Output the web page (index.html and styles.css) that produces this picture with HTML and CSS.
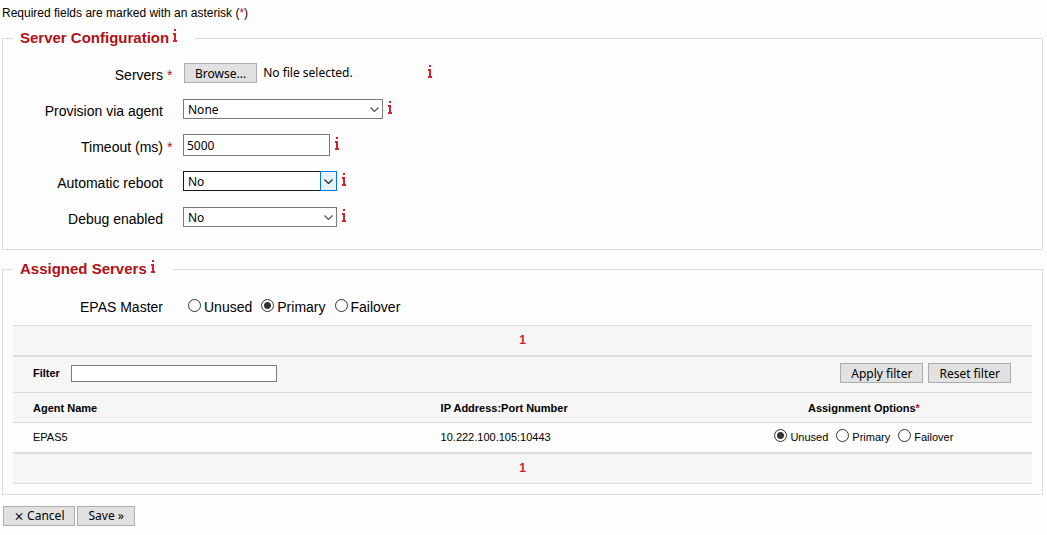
FILE: index.html
```html
<!DOCTYPE html>
<html lang="en">
<head>
  <meta charset="UTF-8">
  <meta name="viewport" content="width=device-width, initial-scale=1.0">
  <title>Server Configuration</title>
  <link rel="stylesheet" href="styles.css">
</head>
<body>
  <svg class="sprite" aria-hidden="true">
    <symbol id="info" viewBox="0 0 4 13">
      <path d="M1 0h2v2h-2zM0 4h3v7h1v2H0v-2h1V6H0z" fill="#d2232a"/>
    </symbol>
    <symbol id="arrow" viewBox="0 0 9 5">
      <path d="M0.5 0.5l4 4 4-4" fill="none" stroke="currentColor" stroke-width="1.2"/>
    </symbol>
  </svg>

  <form>
    <p class="note">Required fields are marked with an asterisk (<span class="star">*</span>)</p>

    <fieldset>
      <legend>Server Configuration <svg class="info"><use href="#info"/></svg></legend>
      <div class="row">
        <label for="browse">Servers</label>
        <span class="star">*</span>
        <div class="control">
          <div class="file">
            <button type="button" id="browse" onclick="document.getElementById('servers').click()">Browse...</button>
            <span>No file selected.</span>
            <input type="file" id="servers" hidden>
          </div>
          <svg class="info"><use href="#info"/></svg>
        </div>
      </div>
      <div class="row">
        <label for="agent">Provision via agent</label>
        <span></span>
        <div class="control">
          <div class="select wide">
            <select id="agent"><option>None</option></select>
            <span class="arrow"><svg><use href="#arrow"/></svg></span>
          </div>
          <svg class="info"><use href="#info"/></svg>
        </div>
      </div>
      <div class="row">
        <label for="timeout">Timeout (ms)</label>
        <span class="star">*</span>
        <div class="control">
          <input type="text" id="timeout" class="timeout" value="5000">
          <svg class="info"><use href="#info"/></svg>
        </div>
      </div>
      <div class="row">
        <label for="reboot">Automatic reboot</label>
        <span></span>
        <div class="control">
          <div class="select active">
            <select id="reboot"><option>No</option><option>Yes</option></select>
            <span class="arrow"><svg><use href="#arrow"/></svg></span>
          </div>
          <svg class="info"><use href="#info"/></svg>
        </div>
      </div>
      <div class="row">
        <label for="debug">Debug enabled</label>
        <span></span>
        <div class="control">
          <div class="select">
            <select id="debug"><option>No</option><option>Yes</option></select>
            <span class="arrow"><svg><use href="#arrow"/></svg></span>
          </div>
          <svg class="info"><use href="#info"/></svg>
        </div>
      </div>
    </fieldset>

    <fieldset class="assigned">
      <legend>Assigned Servers <svg class="info"><use href="#info"/></svg></legend>
      <div class="row">
        <span class="label" id="master">EPAS Master</span>
        <span></span>
        <div class="radios" role="radiogroup" aria-labelledby="master">
          <label><input type="radio" name="master">Unused</label>
          <label><input type="radio" name="master" checked>Primary</label>
          <label><input type="radio" name="master">Failover</label>
        </div>
      </div>

      <div class="list">
        <div class="pager">1</div>
        <div class="filter">
          <label for="filter">Filter</label>
          <input type="text" id="filter">
          <button type="button">Apply filter</button>
          <button type="button">Reset filter</button>
        </div>
        <table>
          <thead>
            <tr>
              <th>Agent Name</th>
              <th>IP Address:Port Number</th>
              <th>Assignment Options<span class="star">*</span></th>
            </tr>
          </thead>
          <tbody>
            <tr>
              <td>EPAS5</td>
              <td>10.222.100.105:10443</td>
              <td>
                <div class="radios">
                  <label><input type="radio" name="epas5" checked>Unused</label>
                  <label><input type="radio" name="epas5">Primary</label>
                  <label><input type="radio" name="epas5">Failover</label>
                </div>
              </td>
            </tr>
          </tbody>
        </table>
        <div class="pager last">1</div>
      </div>
    </fieldset>

    <div class="actions">
      <button type="button">⨯ Cancel</button>
      <button type="button">Save »</button>
    </div>
  </form>
</body>
</html>
```
FILE: styles.css
```css
* {
  box-sizing: border-box;
}
body {
  margin: 0;
  padding: 5px 4px 8px 2px;
  font-family: "Liberation Sans", Arial, sans-serif;
  font-size: 14px;
  line-height: 16px;
  color: #000;
  background: #fdfdfd;
}
.sprite {
  display: none;
}
.note {
  margin: 0 0 8px;
  font-size: 12px;
}
.star {
  color: #c8141e;
}
fieldset {
  margin: 0 0 10px;
  padding: 8px 10px 14px 0;
  border: 1px solid #dcdcdc;
  min-width: 0;
}
legend {
  margin-left: 10px;
  padding: 0 18px 0 7px;
  font-size: 15px;
  line-height: 18px;
  font-weight: bold;
  color: #b01116;
}
.info {
  width: 4px;
  height: 13px;
  margin-bottom: 4px;
}
legend .info {
  margin: 0 0 1px;
}
.row {
  display: grid;
  grid-template-columns: 160px 20px 1fr;
  align-items: center;
  height: 36px;
}
.row > label {
  text-align: right;
  padding-top: 4px;
}
.label {
  text-align: right;
}
.row > .star {
  padding: 4px 0 0 4px;
}
.control {
  display: flex;
  align-items: center;
  gap: 5px;
}
button, input, select, .file {
  font-family: "Noto Sans", Tahoma, sans-serif;
  font-size: 12px;
  color: #000;
}
button {
  height: 20px;
  padding: 0 10px;
  border: 1px solid #adadad;
  background: #e1e1e1;
}
.file {
  display: flex;
  align-items: center;
  gap: 6px;
  width: 240px;
  padding-left: 1px;
}
input[type="text"] {
  border: 1px solid #7a7a7a;
  background: #fff;
}
.timeout {
  width: 147px;
  height: 22px;
  padding: 0 3px;
}
.select {
  position: relative;
  width: 154px;
}
.select.wide {
  width: 200px;
}
.select select {
  appearance: none;
  display: block;
  width: 100%;
  height: 20px;
  padding: 0 4px;
  border: 1px solid #7a7a7a;
  border-radius: 0;
  background: #fff;
}
.arrow {
  position: absolute;
  top: 0;
  right: 0;
  width: 17px;
  height: 20px;
  display: flex;
  align-items: center;
  justify-content: center;
  color: #555;
  pointer-events: none;
}
.arrow svg {
  width: 9px;
  height: 5px;
}
.active select {
  border-color: #171717;
}
.active .arrow {
  border: 1px solid #0078d7;
  background: #e5f1fb;
  color: #222;
}
.radios {
  display: flex;
  gap: 9px;
  padding-left: 5px;
}
.radios label {
  display: flex;
  align-items: center;
  gap: 3px;
}
input[type="radio"] {
  appearance: none;
  width: 13px;
  height: 13px;
  margin: 0 0 3px;
  border: 1px solid #333;
  border-radius: 50%;
  background: #fff;
}
input[type="radio"]:checked {
  background: radial-gradient(circle, #333 3px, #fff 4px);
}
.assigned {
  margin-bottom: 11px;
  padding: 11px 10px 10px;
}
.assigned > legend {
  margin-left: 0;
}
.assigned > .row {
  margin-left: -10px;
}
.list {
  border-top: 1px solid #dcdcdc;
  border-bottom: 1px solid #dcdcdc;
  background: #f6f6f6;
  font-size: 11px;
}
.pager {
  height: 31px;
  line-height: 29px;
  text-align: center;
  font-size: 12px;
  font-weight: bold;
  color: #d2232a;
  border-bottom: 2px solid #dcdcdc;
}
.pager.last {
  height: 29px;
  border-bottom: none;
}
.filter {
  display: flex;
  align-items: center;
  gap: 5px;
  height: 35px;
  padding: 0 21px 3px 20px;
}
.filter label {
  margin-right: 6px;
  font-weight: bold;
}
.filter input {
  width: 206px;
  height: 17px;
  margin-right: auto;
}
table {
  width: 100%;
  table-layout: fixed;
  border-collapse: collapse;
  border-bottom: 2px solid #dcdcdc;
}
th, td {
  height: 30px;
  padding: 0 0 0 20px;
  text-align: left;
  border-top: 1px solid #dcdcdc;
}
th:first-child {
  width: 40%;
}
th:last-child {
  width: 33%;
}
th:last-child, td:last-child {
  padding: 0;
  text-align: center;
}
tbody {
  background: #fdfdfd;
}
td .radios {
  justify-content: center;
  gap: 8px;
  padding: 0;
}
.actions {
  display: flex;
  gap: 2px;
  padding-left: 1px;
}
```
